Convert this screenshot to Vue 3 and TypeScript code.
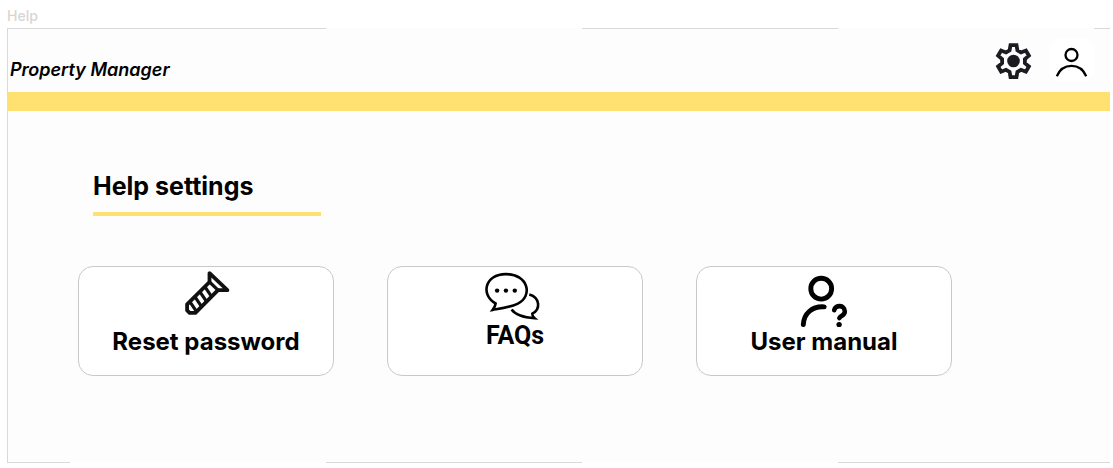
<script setup lang="ts">
type IconName = 'screw' | 'chat' | 'user'

interface HelpCard {
  id: IconName
  label: string
}

const cards: HelpCard[] = [
  { id: 'screw', label: 'Reset password' },
  { id: 'chat', label: 'FAQs' },
  { id: 'user', label: 'User manual' },
]
</script>

<template>
  <div class="page">
    <p class="frame-name">Help</p>
    <div class="sheet">
      <header class="topbar">
        <p class="brand">Property Manager</p>
        <nav class="actions" aria-label="Account">
          <button class="action" type="button" aria-label="Settings">
            <svg viewBox="0 0 44 44" width="44" height="44" fill="none" stroke="#1c1b20" stroke-width="3.8">
              <path d="M18.5 7.1H24.5L25.4 12.3L29 14.4L33.9 12.5L36.9 17.7L32.9 21.1V25.1L36.9 28.5L33.9 33.7L29 31.8L25.4 33.9L24.5 39.1H18.5L17.6 33.9L14 31.8L9.1 33.7L6.1 28.5L10.1 25.1V21.1L6.1 17.7L9.1 12.5L14 14.4L17.6 12.3Z" />
              <circle cx="21.5" cy="23" r="6.3" fill="#1c1b20" stroke="none" />
            </svg>
          </button>
          <button class="action profile" type="button" aria-label="Profile">
            <svg viewBox="0 0 44 44" width="44" height="44" fill="none" stroke="#000" stroke-width="2.3">
              <circle cx="21.5" cy="17" r="6" />
              <path d="M6.8 38.2C12.6 24.4 30.4 24.4 36.2 38.2" />
            </svg>
          </button>
        </nav>
      </header>

      <main class="content">
        <h1 class="title">Help settings</h1>
        <div class="cards">
          <button v-for="card in cards" :key="card.id" class="card" type="button">
            <svg v-if="card.id === 'screw'" class="icon" viewBox="0 0 60 60" width="60" height="60" fill="none" stroke="#111" stroke-width="3.8" stroke-linejoin="round">
              <path d="M33.5 6.2V15L11.1 37.4V43.3L13.6 45.8H19.4L42 23.2H51.4Z" />
              <path d="M33.5 15L42 23.2M28.8 19.7L35.6 29.6M23.8 24.7L30.6 34.6M18.8 29.7L25.6 39.6M13.8 34.7L20.6 44.6" stroke-width="3.2" />
            </svg>
            <svg v-else-if="card.id === 'chat'" class="icon" viewBox="0 0 60 54" width="60" height="54" fill="none" stroke="#000" stroke-width="2.6">
              <path d="M10.6 36.5C-4.8 28 -.2 7.1 20.8 7.1C43.4 7.1 48.4 29.2 32.4 36.8C25 40.3 16.4 41.4 7.7 42.9C9.5 40.5 10.3 38.9 10.6 36.5Z" />
              <path d="M44.3 27.4C55.2 30.6 55.8 42.2 47.3 46.6C47.1 48.3 48.3 50.1 49.6 51.2C38.8 50.6 30.8 48.7 26.6 42.6" />
              <g fill="#000" stroke="none">
                <circle cx="12.1" cy="23.6" r="2.2" />
                <circle cx="20.9" cy="23.6" r="2.2" />
                <circle cx="29.8" cy="23.6" r="2.2" />
              </g>
            </svg>
            <svg v-else class="icon" viewBox="0 0 60 60" width="60" height="60" fill="none" stroke="#000" stroke-width="4.9" stroke-linecap="round">
              <circle cx="27.2" cy="21.7" r="10.4" />
              <path d="M9.3 57.6C9.8 46.5 18.2 39 30.2 39.9" />
              <path d="M40.2 43.2C41.2 37.5 50.8 37.6 50.8 44.4C50.8 48.2 47 48.7 45.4 51" stroke-width="4.6" />
              <circle cx="45.1" cy="57.6" r="2.7" fill="#000" stroke="none" />
            </svg>
            <span class="label" :class="{ plain: card.id === 'chat' }">{{ card.label }}</span>
          </button>
        </div>
      </main>
    </div>
  </div>
</template>

<style>
body {
  margin: 0;
  background: #fff;
}
</style>

<style scoped>
.page {
  box-sizing: border-box;
  min-height: 100vh;
  padding: 0 3px 5px 7px;
  display: flex;
  flex-direction: column;
  font-family: Inter, "Liberation Sans", sans-serif;
  color: #000;
}

.frame-name {
  margin: 0;
  padding-top: 4px;
  height: 24px;
  font-size: 14px;
  font-weight: 500;
  line-height: 23px;
  color: #d6d6d6;
}

/* The outline is broken into strips along the top and bottom edges. */
.sheet {
  flex: 1;
  display: flex;
  flex-direction: column;
  border-left: 1px solid #d9d9d9;
  background:
    linear-gradient(90deg, #d9d9d9 318px, transparent 318px 574px, #d9d9d9 574px 830px, transparent 830px 1086px, #d9d9d9 1086px) top / 100% 1px no-repeat,
    linear-gradient(90deg, #d9d9d9 62px, transparent 62px 318px, #d9d9d9 318px 574px, transparent 574px 830px, #d9d9d9 830px) bottom / 100% 1px no-repeat,
    #fdfdfd;
}

.topbar {
  display: flex;
  align-items: center;
  justify-content: space-between;
  height: 64px;
  padding-right: 16px;
  border-bottom: 19px solid #ffe171;
  margin-left: -1px;
}

.brand {
  margin: 0;
  padding: 20px 0 0 3px;
  font-size: 18px;
  line-height: 24px;
  font-weight: 600;
  font-style: italic;
}

.actions {
  display: flex;
  gap: 14px;
}

.action {
  width: 44px;
  height: 44px;
  padding: 0;
  border: 0;
  border-radius: 12px;
  background: transparent;
  cursor: pointer;
}

.action svg {
  display: block;
}

.profile {
  background: #fff;
}

.content {
  padding: 60px 158px 0 70px;
}

.title {
  box-sizing: border-box;
  width: 228px;
  margin: 0 0 50px 15px;
  padding-bottom: 11px;
  border-bottom: 4px solid #ffe171;
  font-size: 25px;
  line-height: 30px;
  font-weight: 700;
}

.cards {
  display: grid;
  grid-template-columns: repeat(3, 1fr);
  gap: 53px;
}

.card {
  display: flex;
  flex-direction: column;
  align-items: center;
  justify-content: flex-start;
  min-height: 110px;
  padding: 0;
  border: 1px solid #c9c9c9;
  border-radius: 15px;
  background: #fff;
  color: #000;
  font-family: inherit;
  cursor: pointer;
}

.icon {
  display: block;
}

.label {
  font-size: 24px;
  line-height: 30px;
  font-weight: 700;
}

.plain {
  font-family: Roboto, "Liberation Sans", sans-serif;
  font-size: 25px;
}
</style>
